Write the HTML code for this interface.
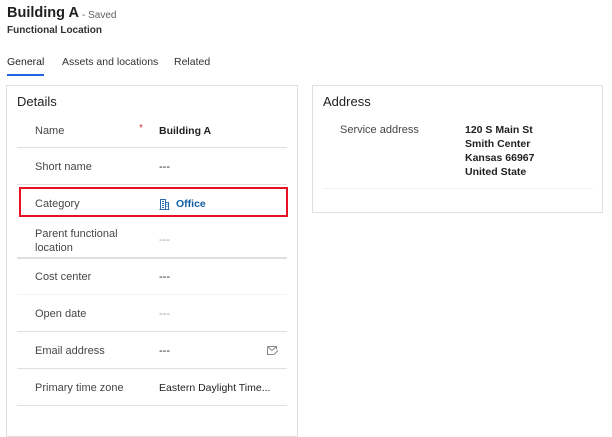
<!DOCTYPE html>
<html><head><style>
*{margin:0;padding:0;box-sizing:border-box}
body{width:612px;height:436px;background:#fff;font-family:"Liberation Sans",sans-serif;color:#323130;position:relative;overflow:hidden}
.a{position:absolute;white-space:nowrap}
.lbl{font-size:11px;color:#484644}
.val{font-size:10.5px;color:#201f1e;font-weight:bold}
.dash{font-size:11px;color:#201f1e}
.light{color:#a19f9d}
.hr{position:absolute;height:1px;background:#e1dfdd}
</style></head><body>
<div class="a" style="left:7px;top:5px;font-size:14.5px;font-weight:bold;color:#201f1e">Building A</div>
<div class="a" style="left:82px;top:10px;font-size:10px;color:#605e5c">- Saved</div>
<div class="a" style="left:7px;top:25px;font-size:10px;font-weight:bold;color:#323130">Functional Location</div>
<div class="a" style="left:7px;top:56px;font-size:10.5px;color:#201f1e">General</div>
<div class="a" style="left:62px;top:56px;font-size:10.5px;color:#323130">Assets and locations</div>
<div class="a" style="left:174px;top:56px;font-size:10.5px;color:#323130">Related</div>
<div class="a" style="left:7px;top:74px;width:37px;height:2px;background:#2266e3"></div>

<div class="a" style="left:6px;top:85px;width:292px;height:352px;border:1px solid #e1dfdd"></div>
<div class="a" style="left:17px;top:94px;font-size:13px;color:#201f1e">Details</div>
<div class="a lbl" style="left:35px;top:125px">Name</div>
<div class="a" style="left:139px;top:123px;font-size:10px;color:#d13438">*</div>
<div class="a val" style="left:159px;top:125px">Building A</div>
<div class="hr" style="left:17px;top:147px;width:270px"></div>
<div class="a lbl" style="left:35px;top:161px">Short name</div>
<div class="a dash" style="left:159px;top:161px">---</div>
<div class="hr" style="left:17px;top:184px;width:270px"></div>
<div class="a" style="left:19px;top:187px;width:269px;height:30px;border:2px solid #e81123"></div>
<div class="a lbl" style="left:35px;top:198px">Category</div>
<svg class="a" style="left:159px;top:198px" width="11" height="12" viewBox="0 0 11 12"><path d="M1.5 11.5V1.5h5v10M6.5 4.5h3v7M0.5 11.5h10M3 3.5h2M3 5.5h2M3 7.5h2M3 9.5h2M7.5 6.5h1M7.5 8.5h1" fill="none" stroke="#2b6cb0" stroke-width="1"/></svg>
<div class="a" style="left:176px;top:198px;font-size:10.5px;font-weight:bold;color:#115ea3">Office</div>
<div class="a lbl" style="left:35px;top:227px;line-height:14px">Parent functional<br>location</div>
<div class="a dash light" style="left:159px;top:234px">---</div>
<div class="hr" style="left:17px;top:257px;width:270px;height:2px"></div>
<div class="a lbl" style="left:35px;top:271px">Cost center</div>
<div class="a dash" style="left:159px;top:271px">---</div>
<div class="hr" style="left:17px;top:294px;width:270px;background:#f3f2f1"></div>
<div class="a lbl" style="left:35px;top:308px">Open date</div>
<div class="a dash light" style="left:159px;top:308px">---</div>
<div class="hr" style="left:17px;top:331px;width:270px"></div>
<div class="a lbl" style="left:35px;top:345px">Email address</div>
<div class="a dash" style="left:159px;top:345px">---</div>
<svg class="a" style="left:267px;top:346px" width="12" height="9" viewBox="0 0 12 9"><path d="M0.5 0.5h9v3M0.5 0.5v8h6M0.5 0.5l4.5 4 4.5-4M7 8.5l4-4" fill="none" stroke="#8a8886" stroke-width="1"/></svg>
<div class="hr" style="left:17px;top:368px;width:270px"></div>
<div class="a lbl" style="left:35px;top:382px">Primary time zone</div>
<div class="a" style="left:159px;top:382px;font-size:10.5px;color:#201f1e">Eastern Daylight Time...</div>
<div class="hr" style="left:17px;top:405px;width:270px"></div>

<div class="a" style="left:312px;top:85px;width:291px;height:128px;border:1px solid #e1dfdd"></div>
<div class="a" style="left:323px;top:94px;font-size:13px;color:#201f1e">Address</div>
<div class="a lbl" style="left:340px;top:124px">Service address</div>
<div class="a val" style="left:465px;top:123px;line-height:14px">120 S Main St<br>Smith Center<br>Kansas 66967<br>United State</div>
<div class="hr" style="left:323px;top:188px;width:270px;background:#f3f2f1"></div>
</body></html>
